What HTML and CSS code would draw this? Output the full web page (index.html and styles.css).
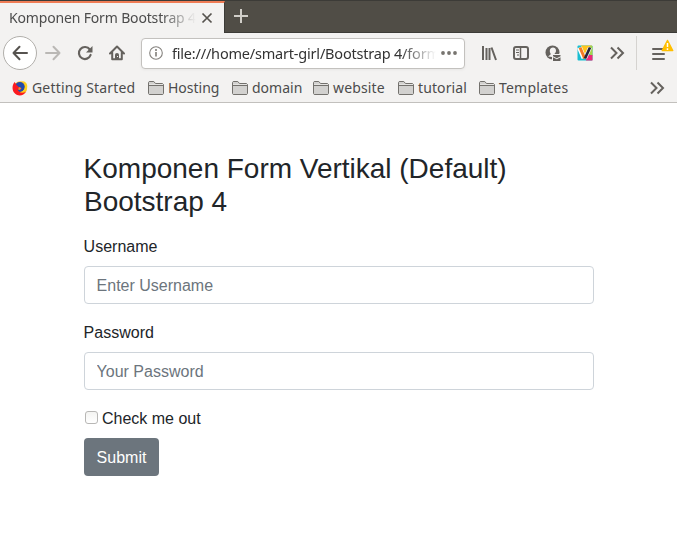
FILE: index.html
```html
<!DOCTYPE html>
<html lang="id">
<head>
<meta charset="utf-8">
<title>Komponen Form Bootstrap 4</title>
<link rel="stylesheet" href="styles.css">
</head>
<body>
<svg class="defs" aria-hidden="true">
  <symbol id="folder" viewBox="0 0 16 14">
    <path d="M.5 12.5V1.5l.7-1h4.6l1.7 2h7l1 1v9l-.7 1H1.2z" fill="#d2d1cf" stroke="#73716d"/>
    <path d="M1 4.5h14" stroke="#73716d"/><path d="M1 3.5h14" stroke="#eeedeb" opacity=".7"/>
  </symbol>
  <symbol id="chevrons" viewBox="0 0 16 16">
    <path d="M2 2.5 7.5 8 2 13.5M8.5 2.5 14 8l-5.500 5.500" fill="none" stroke="#65625e" stroke-width="2"/>
  </symbol>
</svg>
<header class="tabs">
  <div class="tab">
    <span class="tab-title">Komponen Form Bootstrap 4</span>
    <svg class="close" width="12" height="12" viewBox="0 0 12 12"><path d="m1.500 1.500 9 9m0-9-9 9" stroke="#56534e" stroke-width="1.700"/></svg>
  </div>
  <svg class="plus" width="16" height="16" viewBox="0 0 16 16"><path d="M8 1v14M1 8h14" stroke="#d0cec8" stroke-width="2"/></svg>
</header>
<nav class="toolbar">
  <span class="back"><svg width="16" height="16" viewBox="0 0 16 16"><path d="M15 8H1.500M7.500 1.800 1.500 8l6 6.200" fill="none" stroke="#56534f" stroke-width="2" stroke-linecap="round" stroke-linejoin="round"/></svg></span>
  <span class="slot"><svg width="16" height="16" viewBox="0 0 16 16"><path d="M1 8h13.500M8.500 1.800l6 6.200-6 6.200" fill="none" stroke="#bab8b5" stroke-width="2" stroke-linecap="round" stroke-linejoin="round"/></svg></span>
  <span class="slot"><svg width="16" height="16" viewBox="0 0 16 16"><path d="M12.800 4.500A6 6 0 1 0 13.600 10" fill="none" stroke="#65625e" stroke-width="2.200" stroke-linecap="round"/><path d="M15.500 1v6.500H9z" fill="#65625e"/></svg></span>
  <span class="slot"><svg width="16" height="16" viewBox="0 0 16 16"><path d="M1 8.500 8 1.500l7 7M3.200 7.500v6.700h9.600V7.500" fill="none" stroke="#65625e" stroke-width="2" stroke-linecap="round" stroke-linejoin="round"/><path d="M6 14V9.500Q6 8 8 8t2 1.500V14z" fill="#65625e"/><path d="M8 11h1v1H8z" fill="#f3f2f1"/></svg></span>
  <div class="address">
    <svg width="14" height="14" viewBox="0 0 14 14"><circle cx="7" cy="7" r="6.300" fill="none" stroke="#85827e" stroke-width="1.100"/><path d="M7 6v4.500" stroke="#77746f" stroke-width="1.500"/><circle cx="7" cy="4" r="1" fill="#77746f"/></svg>
    <span class="url">file:///home/smart-girl/Bootstrap 4/form</span>
    <svg class="dots" width="16" height="4" viewBox="0 0 16 4"><g fill="#77746f"><circle cx="2" cy="2" r="1.900"/><circle cx="8" cy="2" r="1.900"/><circle cx="14" cy="2" r="1.900"/></g></svg>
  </div>
  <span class="slot"><svg width="16" height="16" viewBox="0 0 16 16"><path d="M2 1v14M5.500 3v12M8.500 3v12M10.500 2.500 15 15" stroke="#65625e" stroke-width="2"/></svg></span>
  <span class="slot"><svg width="16" height="16" viewBox="0 0 16 16"><rect x="1" y="2" width="14" height="12" rx="2" fill="none" stroke="#65625e" stroke-width="2"/><path d="M7.500 2v12" stroke="#65625e" stroke-width="1.500"/><path d="M3 5h3M3 7.500h3M4 10h2" stroke="#65625e"/></svg></span>
  <span class="slot"><svg width="16" height="16" viewBox="0 0 16 16"><circle cx="7.500" cy="7.500" r="7" fill="#65625e"/><path d="M4.800 5.700C5 1.500 11 1.700 11 5.500c0 1.800-.8 2.500-1.500 3.300v1.400L7.200 12 3 11.500l2.600-2V8.500Q4.600 7.400 4.800 5.700z" fill="#f3f2f1"/><path d="M7 9h9v7H7z" fill="#f3f2f1"/><path d="M8 10h7.500v1.200l-3.700 2L8 11.200zM8 12.300l3.800 2 3.700-2V16H8z" fill="#65625e"/></svg></span>
  <span class="slot"><svg width="16" height="16" viewBox="0 0 16 16"><rect x=".5" y=".5" width="15" height="15" rx="1" fill="#18bed2"/><path d="M4 .5h11L12 8H7z" fill="#ffc51b"/><path d="M13 1h2.500v10L12 9z" fill="#a9d34b"/><path d="m10 10 5.500 0v5.500H9z" fill="#ed2a79"/><path d="M2.500 2.500 7 13" stroke="#fff" stroke-width="5"/><path d="M13 2.500 8 13.500" stroke="#fff" stroke-width="4"/><path d="m3 2.500 4.700 11" stroke="#f37b26" stroke-width="3"/><path d="m13 2.500-5 11" stroke="#25233d" stroke-width="2.700"/></svg></span>
  <span class="slot"><svg width="16" height="16"><use href="#chevrons"/></svg></span>
  <span class="menu"><svg width="24" height="28" viewBox="0 0 24 28"><path d="M2 12h11M2 17h11M2 22h11" stroke="#65625e" stroke-width="2" stroke-linecap="round"/><path d="M16.500 3.500 11.300 13.500h10.400z" fill="#ffbf00" stroke="#ffbf00" stroke-width="1.500" stroke-linejoin="round"/><path d="M16.500 6v4M16.500 11.300V13" stroke="#fff" stroke-width="1.500"/></svg></span>
</nav>
<div class="bookmarks">
  <span class="bookmark started"><svg width="16" height="16" viewBox="0 0 16 16"><circle cx="8.300" cy="8" r="6.800" fill="#ffbd19"/><circle cx="7.800" cy="7" r="5" fill="#224bad"/><path d="M2.700 2C0 5-.1 9.300 2 12.500c3 4.200 9.500 3.900 12-.7-2 1.200-4 1.300-5.500.6-2-.7-3-2-2.700-3.600L8 8.500 6 6.300 4.500 5z" fill="#fb1a20"/><path d="M9 .8c2.700 1 4 3.300 4 5.800-.1 2.600-1.500 4.500-3.800 5.100 6.500.5 7.900-7.200 3.600-9.900z" fill="#ffd21f"/><path d="m7 7 2.500 1L8 10l-2-.5z" fill="#ff851b"/></svg><span>Getting Started</span></span>
  <span class="bookmark hosting"><svg width="16" height="14"><use href="#folder"/></svg><span>Hosting</span></span>
  <span class="bookmark domain"><svg width="16" height="14"><use href="#folder"/></svg><span>domain</span></span>
  <span class="bookmark website"><svg width="16" height="14"><use href="#folder"/></svg><span>website</span></span>
  <span class="bookmark tutorial"><svg width="16" height="14"><use href="#folder"/></svg><span>tutorial</span></span>
  <span class="bookmark templates"><svg width="16" height="14"><use href="#folder"/></svg><span>Templates</span></span>
  <svg class="more" width="16" height="16"><use href="#chevrons"/></svg>
</div>
<main>
  <h3>Komponen Form Vertikal (Default) Bootstrap 4</h3>
  <form>
    <div class="group"><label for="username">Username</label><input class="control" id="username" type="text" placeholder="Enter Username"></div>
    <div class="group"><label for="password">Password</label><input class="control" id="password" type="password" placeholder="Your Password"></div>
    <label class="check"><input type="checkbox">Check me out</label>
    <button type="button">Submit</button>
  </form>
</main>
</body>
</html>
```

FILE: styles.css
```css
* { box-sizing: border-box; }
body { margin: 0; background: #fff; color: #212529; font: 16px/24px "Liberation Sans", sans-serif; overflow: hidden; }
svg { display: block; flex: none; }
.defs { position: absolute; width: 0; height: 0; }
.tabs { display: flex; height: 33px; background: #504d46; border-top: 1px solid #3c3b37; border-bottom: 1px solid #3c3b37; font: 14px/20px "Noto Sans", sans-serif; }
.tab { display: flex; align-items: center; width: 225px; height: 32px; padding-left: 9px; background: #f3f2f1; border-top: 2px solid #ef7c55; border-right: 1px solid #3c3b37; color: #4c4c4c; }
.tab-title { width: 187px; overflow: hidden; white-space: nowrap; letter-spacing: -.16px; mask-image: linear-gradient(to right, #000 152px, transparent 187px); }
.close { margin-left: 5px; }
.plus { margin: 7px 0 0 8px; }
.toolbar { display: flex; align-items: center; height: 40px; padding-left: 3px; background: #f3f2f1; }
.back { display: grid; place-items: center; width: 34px; height: 34px; border: 1px solid #b1afab; border-radius: 50%; background: #fff; }
.slot { display: grid; place-items: center; flex: none; width: 32px; height: 32px; }
.address { display: flex; align-items: center; flex: none; width: 324px; height: 31px; margin: 0 8px; padding: 0 7px; background: #fff; border: 1px solid #c3c1be; border-radius: 4px; box-shadow: 0 1px 3px #0000000d; font: 14.5px/22px "Noto Sans", sans-serif; color: #333; }
.url { width: 266px; margin-left: 9px; overflow: hidden; white-space: nowrap; letter-spacing: -.2px; mask-image: linear-gradient(to right, #000 228px, transparent 264px); }
.dots { margin-left: 4px; }
.menu { display: flex; align-items: center; height: 34px; margin-left: 3px; padding: 0 0 4px 14px; border-left: 1px solid #d5d3d0; }
.bookmarks { display: flex; align-items: center; height: 30px; padding: 0 12px; background: #f3f2f1; border-bottom: 1px solid #c2c0bd; font: 14px/20px "Noto Sans", sans-serif; color: #4c4c4c; }
.bookmark { display: flex; align-items: center; gap: 4px; flex: none; white-space: nowrap; }
.started { width: 136px; letter-spacing: .18px; }
.hosting { width: 84px; }
.domain { width: 81px; }
.website { width: 85px; letter-spacing: .15px; }
.tutorial { width: 81px; letter-spacing: .1px; }
.templates { letter-spacing: .2px; }
.more { margin-left: auto; }
main { width: 510px; margin: 48px 0 0 84px; }
h3 { margin: 0 0 15.4px; padding-top: .6px; font-size: 28px; font-weight: 400; line-height: 33.6px; text-indent: -.4px; letter-spacing: -.01px; }
form { display: flex; flex-direction: column; align-items: flex-start; }
.group { width: 100%; margin-bottom: 16px; }
.group label { display: block; height: 24px; padding-top: 1px; margin-bottom: 8px; text-indent: -.4px; }
.control { display: block; width: 100%; height: 38px; padding: 7px 11.6px 5px; border: 1px solid #ced4da; border-radius: 4px; background: #fff; font: inherit; }
.control::placeholder { color: #6c757d; opacity: 1; }
.check { display: flex; align-items: center; height: 24px; padding-top: 2px; margin-bottom: 8px; }
.check input { appearance: none; width: 13px; height: 13px; margin: 0 4.4px 3px .6px; border: 1px solid #b8b7b5; border-radius: 3px; background: linear-gradient(#f4f4f2, #fff); }
button { width: 75px; height: 38px; padding: 1px 0 0; border: 0; border-radius: 4px; background: #6c757d; color: #fff; font: inherit; }
```
